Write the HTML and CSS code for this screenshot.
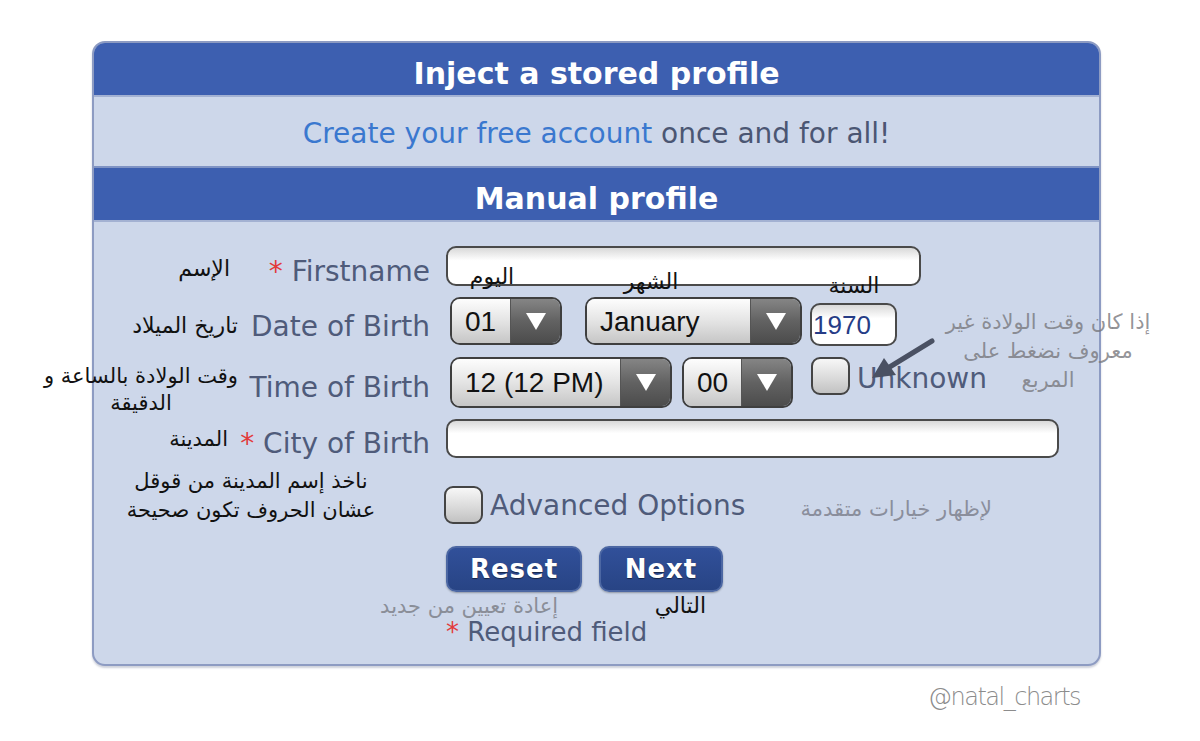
FILE: index.html
```html
<!DOCTYPE html>
<html lang="en">
<head>
    <meta charset="UTF-8">
    <meta name="viewport" content="width=device-width, initial-scale=1.0">
    <title>Natal chart - profile</title>
    <link rel="stylesheet" href="styles.css">
</head>
<body>
    <div class="page">
        <div class="panel">
            <div class="panel-head">Inject a stored profile</div>
            <div class="panel-sub"><a href="#" class="link">Create your free account</a> once and for all!</div>
            <div class="panel-head">Manual profile</div>
            <form class="panel-body">
                <div class="form-row row-name">
                    <label class="label"><span class="star">*</span> Firstname</label>
                    <div class="fields">
                        <div class="text-input name-input"></div>
                    </div>
                </div>
                <div class="form-row row-date">
                    <label class="label">Date of Birth</label>
                    <div class="fields">
                        <div class="select select-day">
                            <span class="select-value">01</span>
                            <span class="select-arrow"><i class="tri"></i></span>
                        </div>
                        <div class="select select-month">
                            <span class="select-value">January</span>
                            <span class="select-arrow"><i class="tri"></i></span>
                        </div>
                        <div class="text-input year-input">1970</div>
                    </div>
                </div>
                <div class="form-row row-time">
                    <label class="label">Time of Birth</label>
                    <div class="fields">
                        <div class="select select-hour">
                            <span class="select-value">12 (12 PM)</span>
                            <span class="select-arrow"><i class="tri"></i></span>
                        </div>
                        <div class="select select-minute">
                            <span class="select-value">00</span>
                            <span class="select-arrow"><i class="tri"></i></span>
                        </div>
                        <span class="checkbox unknown-box"></span>
                        <span class="check-label">Unknown</span>
                    </div>
                </div>
                <div class="form-row row-city">
                    <label class="label"><span class="star">*</span> City of Birth</label>
                    <div class="fields">
                        <div class="text-input city-input"></div>
                    </div>
                </div>
                <div class="form-row row-adv">
                    <span></span>
                    <div class="fields">
                        <span class="checkbox adv-box"></span>
                        <span class="check-label">Advanced Options</span>
                    </div>
                </div>
                <div class="form-row row-buttons">
                    <span></span>
                    <div class="fields">
                        <button type="button" class="btn btn-reset">Reset</button>
                        <button type="button" class="btn btn-next">Next</button>
                    </div>
                </div>
                <div class="form-row row-required">
                    <span></span>
                    <div class="fields">
                        <span class="required"><span class="star">*</span> Required field</span>
                    </div>
                </div>
            </form>
        </div>

        <!-- notes written over the screenshot -->
        <div class="note note-name" dir="rtl">الإسم</div>
        <div class="note note-date" dir="rtl">تاريخ الميلاد</div>
        <div class="note note-time" dir="rtl">وقت الولادة بالساعة و<br>الدقيقة</div>
        <div class="note note-city" dir="rtl">المدينة</div>
        <div class="note note-google" dir="rtl">ناخذ إسم المدينة من قوقل<br>عشان الحروف تكون صحيحة</div>
        <div class="note note-day" dir="rtl">اليوم</div>
        <div class="note note-month" dir="rtl">الشهر</div>
        <div class="note note-year" dir="rtl">السنة</div>
        <div class="note note-unknown" dir="rtl">إذا كان وقت الولادة غير<br>معروف نضغط على<br>المربع</div>
        <div class="note note-adv" dir="rtl">لإظهار خيارات متقدمة</div>
        <div class="note note-reset" dir="rtl">إعادة تعيين من جديد</div>
        <div class="note note-next" dir="rtl">التالي</div>

        <svg class="arrow" width="70" height="50" viewBox="0 0 70 50">
            <line x1="66" y1="4" x2="22" y2="31" stroke="#4a5163" stroke-width="5" stroke-linecap="round"/>
            <polygon points="6,41 18,21 30,38" fill="#4a5163"/>
        </svg>

        <div class="watermark">@natal_charts</div>
    </div>
</body>
</html>
```

FILE: styles.css
```css
* {
    box-sizing: border-box;
}

body {
    margin: 0;
    background-color: #fff;
    font-family: "DejaVu Sans", Verdana, sans-serif;
}

.page {
    position: relative;
    width: 1200px;
    height: 741px;
    padding-top: 41px;
    padding-left: 92px;
}

.panel {
    width: 1009px;
    border: 2px solid #8d9bc2;
    border-radius: 13px;
    background-color: #cdd7ea;
    overflow: hidden;
    box-shadow: 0 2px 2px rgba(60, 70, 110, 0.25);
}

.panel-head {
    background-color: #3d5fb0;
    color: #fff;
    font-weight: bold;
    font-size: 30px;
    text-align: center;
    height: 54px;
    line-height: 62px;
    border-bottom: 2px solid #a3b1d2;
}

.panel-sub {
    height: 71px;
    line-height: 74px;
    text-align: center;
    font-size: 28px;
    color: #4b5673;
    border-bottom: 2px solid #7f93c4;
}

.link {
    color: #3a78cf;
    text-decoration: none;
}

.panel-body {
    margin: 0;
    padding-top: 22px;
    padding-bottom: 23px;
}

.form-row {
    display: grid;
    grid-template-columns: 336px 1fr;
    column-gap: 16px;
    align-items: center;
}

.label {
    text-align: right;
    font-size: 28px;
    color: #4f5b7a;
    white-space: nowrap;
    padding-top: 10px;
}

.star {
    color: #e23b3b;
}

.fields {
    display: flex;
    align-items: center;
    height: 100%;
}

.row-name { height: 44px; }
.row-date { height: 52px; margin-top: 7px; }
.row-time { height: 52px; margin-top: 9px; }
.row-city { height: 44px; margin-top: 8px; }
.row-adv { height: 48px; margin-top: 21px; }
.row-buttons { height: 46px; margin-top: 17px; }
.row-required { height: 24px; margin-top: 25px; }

.text-input {
    height: 40px;
    border: 2px solid #4a4a4a;
    border-radius: 10px;
    background: linear-gradient(#d9d9d9, #fff 35%, #fff);
}

.name-input {
    width: 475px;
}

.city-input {
    width: 613px;
    height: 39px;
}

.year-input {
    width: 87px;
    height: 43px;
    margin-left: 8px;
    margin-top: 6px;
    font-family: "Liberation Sans", Arial, sans-serif;
    font-size: 26px;
    line-height: 40px;
    padding-left: 1px;
    color: #263c86;
}

.select {
    display: flex;
    height: 48px;
    border: 2px solid #3f3f3f;
    border-radius: 10px;
    overflow: hidden;
    font-family: "Liberation Sans", Arial, sans-serif;
    font-size: 28px;
    color: #111;
}

.select-value {
    flex: 1;
    display: flex;
    align-items: center;
    padding-left: 13px;
    padding-top: 2px;
    background: linear-gradient(#fdfdfd, #e4e4e4 50%, #c6c6c6);
    white-space: nowrap;
}

.select-arrow {
    width: 50px;
    display: flex;
    align-items: center;
    justify-content: center;
    background: linear-gradient(#858585, #626262 50%, #4c4c4c);
    border-left: 1px solid #555;
}

.tri {
    width: 0;
    height: 0;
    border-left: 10px solid transparent;
    border-right: 10px solid transparent;
    border-top: 17px solid #fff;
}

.select-day {
    width: 112px;
    margin-left: 4px;
}

.select-month {
    width: 217px;
    margin-left: 23px;
}

.select-hour {
    width: 222px;
    height: 51px;
    margin-left: 4px;
}

.select-minute {
    width: 111px;
    height: 51px;
    margin-left: 10px;
}

.checkbox {
    display: inline-block;
    width: 39px;
    height: 38px;
    border: 2px solid #444;
    border-radius: 9px;
    background: linear-gradient(#f7f7f7, #d8d8d8 60%, #c2c2c2);
}

.unknown-box {
    margin-left: 18px;
    margin-top: -13px;
}

.adv-box {
    margin-left: -2px;
}

.check-label {
    font-size: 28px;
    color: #4f5b7a;
    margin-left: 7px;
}

.row-time .check-label {
    margin-top: -8px;
}

.btn {
    height: 46px;
    border: 2px solid #4c67a3;
    border-radius: 10px;
    background: linear-gradient(#31509a, #284485);
    color: #fff;
    font-family: "DejaVu Sans", Verdana, sans-serif;
    font-weight: bold;
    font-size: 26px;
    letter-spacing: 1px;
    text-shadow: 0 1px 1px rgba(0, 0, 0, 0.5);
    padding: 0;
    box-shadow: 0 1px 2px rgba(0, 0, 0, 0.3);
}

.btn-reset {
    width: 136px;
}

.btn-next {
    width: 124px;
    margin-left: 17px;
}

.required {
    font-size: 26px;
    color: #4f5b7a;
}

.note {
    position: absolute;
    font-family: "DejaVu Sans", sans-serif;
    font-size: 22px;
    line-height: 28px;
    color: #111;
    white-space: nowrap;
}

.note-name { right: 970px; top: 255px; }
.note-date { right: 962px; top: 312px; }
.note-time { left: 36px; width: 210px; top: 363px; line-height: 27px; text-align: center; font-size: 21px; }
.note-city { right: 972px; top: 425px; font-size: 21px; }
.note-google { left: 116px; width: 270px; top: 467px; line-height: 29px; text-align: center; font-size: 21px; }
.note-day { left: 462px; width: 60px; top: 263px; text-align: center; }
.note-month { left: 616px; width: 70px; top: 268px; text-align: center; }
.note-year { left: 824px; width: 60px; top: 272px; text-align: center; }

.note-unknown {
    left: 936px;
    width: 224px;
    top: 308px;
    line-height: 29px;
    text-align: center;
    font-size: 21px;
    color: rgba(120, 120, 125, 0.8);
}

.note-adv {
    right: 208px;
    top: 495px;
    font-size: 21px;
    color: #8a8e9c;
}

.note-reset {
    right: 642px;
    top: 592px;
    font-size: 21px;
    color: #8a8e98;
}

.note-next {
    right: 494px;
    top: 592px;
}

.arrow {
    position: absolute;
    left: 866px;
    top: 337px;
}

.watermark {
    position: absolute;
    left: 928px;
    top: 683px;
    font-family: "DejaVu Sans", sans-serif;
    font-weight: 200;
    font-size: 24px;
    letter-spacing: -1.5px;
    color: #8c8c8c;
}
```
